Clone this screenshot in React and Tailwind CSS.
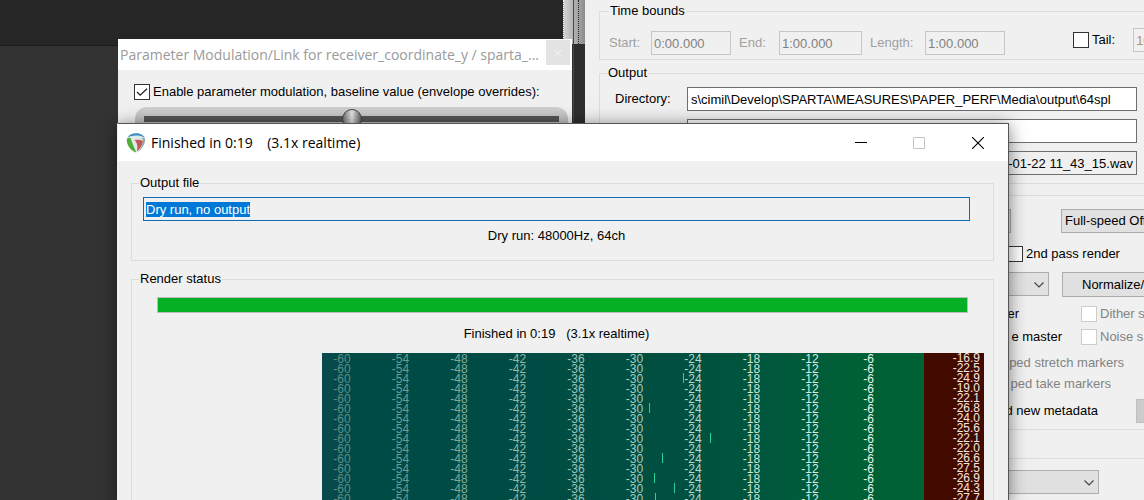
import { useEffect, useRef } from "react";

const SCALE = ["-60", "-54", "-48", "-42", "-36", "-30", "-24", "-18", "-12", "-6"];
const SCALE_COLORS = [
  "text-[#5f8c88]",
  "text-[#6f9a92]",
  "text-[#82aa9c]",
  "text-[#93b7aa]",
  "text-[#9fc2b4]",
  "text-[#a9ccbe]",
  "text-[#b8d8ca]",
  "text-[#cbe6d8]",
  "text-[#d8eee2]",
  "text-[#e6f6ec]",
];

// peak level per channel, with the position of its marker along the meter (percent)
const CHANNELS = [
  { peak: "-16.9" },
  { peak: "-22.5" },
  { peak: "-24.9", mark: 54.6 },
  { peak: "-19.0" },
  { peak: "-22.1" },
  { peak: "-26.8", mark: 49.4 },
  { peak: "-24.0" },
  { peak: "-25.6" },
  { peak: "-22.1", mark: 58.6 },
  { peak: "-22.0" },
  { peak: "-26.6", mark: 51.4 },
  { peak: "-27.5" },
  { peak: "-26.9", mark: 50.1 },
  { peak: "-24.3", mark: 53.1 },
  { peak: "-27.7", mark: 50.3 },
];

const CHECK =
  "peer h-4 w-4 appearance-none border border-[#333] bg-white disabled:border-[#ccc]";

function Check({ label, dim, checked, className = "" }) {
  return (
    <label className={"flex items-center gap-[3px] " + (dim ? "text-[#838383] " : "") + className}>
      <span className="relative flex h-4 w-4 shrink-0">
        <input type="checkbox" defaultChecked={checked} disabled={dim} className={CHECK} />
        <svg
          viewBox="0 0 16 16"
          className="pointer-events-none absolute inset-0 hidden h-4 w-4 peer-checked:block"
          fill="none"
          stroke="#222"
          strokeWidth="1.3"
        >
          <path d="M3 8l3.200 3.200L13 4.800" />
        </svg>
      </span>
      {label}
    </label>
  );
}

function TimeField({ label, value, labelClass, inputClass }) {
  return (
    <label className="flex items-center text-[#a0a0a0]">
      <span className={labelClass}>{label}</span>
      <input
        disabled
        defaultValue={value}
        className={"h-6 border border-[#c6c6c6] bg-[#f0f0f0] px-0.5 text-[#808080] " + inputClass}
      />
    </label>
  );
}

function Chevron() {
  return (
    <svg
      viewBox="0 0 10 6"
      className="pointer-events-none absolute top-[10px] right-[5px] h-[6px] w-[10px]"
      fill="none"
      stroke="#444"
      strokeWidth="1.2"
    >
      <path d="M.5.5L5 5 9.5.5" />
    </svg>
  );
}

function RenderSettings() {
  return (
    <section
      aria-label="Render settings"
      className="absolute inset-y-0 right-0 left-[585px] overflow-hidden bg-[#f0f0f0] pt-[3px] pl-[14px] whitespace-nowrap"
    >
      <fieldset className="border border-r-0 border-[#dcdcdc] pt-[9px] pb-1 pl-[9px]">
        <legend className="px-px">Time bounds</legend>
        <div className="flex h-[27px]">
          <div className="mt-[3px] flex shrink-0 gap-2">
            <TimeField label="Start:" value="0:00.000" labelClass="w-[42px]" inputClass="w-20" />
            <TimeField label="End:" value="1:00.000" labelClass="w-10" inputClass="w-[83px]" />
            <TimeField label="Length:" value="1:00.000" labelClass="w-[55px]" inputClass="w-20" />
          </div>
          <Check label="Tail:" className="ml-[68px] h-6 shrink-0" />
          <input
            aria-label="Tail length"
            disabled
            defaultValue="1000"
            className="ml-[18px] h-6 w-20 shrink-0 border border-[#c6c6c6] bg-[#f0f0f0] px-0.5 text-[#b58f74]"
          />
        </div>
      </fieldset>

      <fieldset className="mt-[5px] flex flex-col gap-2 border border-r-0 border-[#dcdcdc] pt-[6px] pb-2 pl-[15px]">
        <legend className="-ml-2 px-px">Output</legend>
        <label className="flex items-center">
          <span className="w-[72px]">Directory:</span>
          <input
            defaultValue="s\cimil\Develop\SPARTA\MEASURES\PAPER_PERF\Media\output\64spl"
            className="h-6 w-[450px] shrink-0 border border-[#6e6e6e] bg-white px-[3px]"
          />
        </label>
        <input
          aria-label="File name"
          className="ml-[72px] h-6 w-[450px] shrink-0 border border-[#6e6e6e] bg-white px-[3px]"
        />
        <input
          aria-label="Render to"
          readOnly
          value="5-01-22 11_43_15.wav"
          className="ml-[72px] h-6 w-[450px] shrink-0 border border-[#6e6e6e] bg-[#f0f0f0] px-[3px] text-right"
        />
      </fieldset>

      <div className="mt-[11px] flex flex-col border border-r-0 border-[#dcdcdc] pt-[13px] pb-[6px]">
        <div className="flex">
          <button
            aria-label="Channels"
            className="ml-[331px] h-6 w-20 shrink-0 border border-[#adadad] bg-[#e1e1e1]"
          />
          <select
            aria-label="Render speed"
            className="ml-[50px] h-6 w-40 shrink-0 appearance-none border border-[#adadad] bg-[#e1e1e1] pl-[3px]"
          >
            <option>Full-speed Offline</option>
          </select>
        </div>
        <Check label="2nd pass render" className="mt-[13px] ml-[407px]" />
        <div className="mt-[10px] flex">
          <span className="relative ml-[300px] flex w-[149px] shrink-0">
            <select
              aria-label="Resample mode"
              className="h-6 w-full appearance-none border border-[#adadad] bg-[#e1e1e1]"
            />
            <Chevron />
          </span>
          <button className="ml-[13px] h-[25px] w-40 shrink-0 border border-[#adadad] bg-[#e1e1e1] pl-[19px] text-left">
            Normalize/Limit...
          </button>
        </div>
        <div className="mt-[9px] flex">
          <span className="w-[419px] shrink-0 text-right">er</span>
          <Check label="Dither s" dim className="ml-[62px]" />
        </div>
        <div className="mt-[7px] flex">
          <span className="w-[462px] shrink-0 text-right">e master</span>
          <Check label="Noise s" dim className="ml-[19px]" />
        </div>
        <span className="mt-[10px] w-[524px] text-right text-[#838383]">ped stretch markers</span>
        <span className="mt-[5px] w-[511px] text-right text-[#838383]">ped take markers</span>
        <div className="mt-[7px] flex items-center">
          <span className="w-[498px] shrink-0 text-right">d new metadata</span>
          <button
            aria-label="Metadata"
            className="ml-[38px] h-6 w-20 shrink-0 border border-[#bfbfbf] bg-[#cccccc]"
          />
        </div>
      </div>

      <div className="mt-7 border border-r-0 border-[#dcdcdc] pt-[11px] pb-10">
        <span className="relative ml-[200px] flex w-[299px]">
          <select
            aria-label="Format"
            className="h-6 w-full appearance-none border border-[#adadad] bg-[#e1e1e1]"
          />
          <Chevron />
        </span>
      </div>
    </section>
  );
}

function ModulationWindow() {
  return (
    <section
      aria-label="Parameter modulation"
      className="absolute top-[39px] left-[118px] h-40 w-[454px] bg-[#f0f0f0]"
    >
      <header className="flex h-[31px] items-center justify-between bg-white pl-[2px]">
        <h2 className="font-['Open_Sans','Noto_Sans',sans-serif] text-sm whitespace-nowrap text-[#9a9a9a]">
          Parameter Modulation/Link for receiver_coordinate_y / sparta_...
        </h2>
        <button
          aria-label="Close"
          className="mr-0.5 mb-1 flex h-[25px] w-6 shrink-0 items-center justify-center bg-[#e3e3e3]"
        >
          <svg viewBox="0 0 10 10" className="h-2 w-2" stroke="#f4f4f4" strokeWidth="1.2">
            <path d="M1 1l8 8M9 1L1 9" />
          </svg>
        </button>
      </header>
      <Check
        checked
        label="Enable parameter modulation, baseline value (envelope overrides):"
        className="mt-[14px] ml-4 whitespace-nowrap"
      />
      <div className="mt-[7px] mr-1 ml-[17px] flex h-6 items-center rounded-t-xl bg-linear-to-b from-[#cfcfcf] to-[#b8b8b8] px-[9px]">
        <input
          type="range"
          aria-label="Baseline value"
          defaultValue="50"
          className="h-[6px] w-full appearance-none bg-[#555] [&::-webkit-slider-thumb]:h-5 [&::-webkit-slider-thumb]:w-5 [&::-webkit-slider-thumb]:appearance-none [&::-webkit-slider-thumb]:rounded-full [&::-webkit-slider-thumb]:border [&::-webkit-slider-thumb]:border-[#444] [&::-webkit-slider-thumb]:bg-linear-to-r [&::-webkit-slider-thumb]:from-[#777] [&::-webkit-slider-thumb]:via-[#e6e6e6] [&::-webkit-slider-thumb]:to-[#666]"
        />
      </div>
    </section>
  );
}

function Logo() {
  return (
    <svg viewBox="0 0 20 20" className="h-5 w-5 shrink-0">
      <path d="M1 5.500C3 2 6 .3 10 .3s7.500 1.500 9 5c1 5-3.500 12-9 14.500C4 18 0 11 1 5.500z" fill="#dfe9e8" />
      <path d="M1.500 4.500C3.500 1.500 6.500.2 10 .2c4 0 7.500 1.500 9 5C17 3.500 14.500 2.800 11.500 2.600 8 2.300 4.500 3 1.500 4.500z" fill="#3a8cc0" />
      <path d="M1 5.500C2 4.800 3.500 4.500 4.500 5c1.200 3.500 3 8 5.800 14.600C4 17.500 0 11 1 5.500z" fill="#4fae35" />
      <path d="M8.500 7c3-.6 6.500-.3 8.500 1.200-.5 3.500-3 7.800-6 10.300.8-4.500.6-8.500-2.500-11.500z" fill="#c4575a" />
      <path d="M15 4.500c1.800.2 3.200.8 4.200 1.800-.1 4.500-3.200 9.700-7.200 12.700 3-3.800 5-8 5-11-.2-1.600-.8-2.700-2-3.500z" fill="#8fa6a6" />
    </svg>
  );
}

function LevelMeter() {
  return (
    <div className="relative mt-3 mr-[9px] ml-[189px] flex flex-col overflow-hidden bg-[linear-gradient(90deg,#094a50_0%,#004b45_5%,#004c45_30%,#005040_55%,#005a3c_72%,#006035_80%,#006236_91%,#430a00_91%,#430a00_100%)] font-['Liberation_Sans',Arial,sans-serif] text-xs">
      {CHANNELS.map((channel, row) => (
        <div key={row} className="relative flex h-[10px] items-center leading-[10px]">
          <div className="grid w-[585px] grid-cols-10 pt-0.5">
            {SCALE.map((db, i) => (
              <span key={db} className={"w-10 text-center " + SCALE_COLORS[i]}>
                {db}
              </span>
            ))}
          </div>
          <span className="flex-1 pr-[4px] text-right text-[#f4e8e0]">{channel.peak}</span>
          {channel.mark && (
            <i className="absolute inset-y-0 w-px bg-[#2bd09c]" style={{ left: channel.mark + "%" }} />
          )}
        </div>
      ))}
    </div>
  );
}

function RenderDialog() {
  const fileRef = useRef(null);
  useEffect(() => {
    fileRef.current.focus();
    fileRef.current.select();
  }, []);

  return (
    <section
      role="dialog"
      aria-label="Render progress"
      className="absolute top-[123px] left-[117px] w-[892px] border border-[#555] border-l-[#f0f0f0] bg-[#f0f0f0] shadow-[0_2px_16px_rgba(0,0,0,0.5)]"
    >
      <header className="flex h-[37px] items-center bg-white pl-2">
        <Logo />
        <h1 className="ml-[5px] flex-1 font-['Open_Sans','Noto_Sans',sans-serif] text-sm whitespace-pre text-black">
          {"Finished in 0:19    (3.1x realtime)"}
        </h1>
        <button aria-label="Minimize" className="flex h-full w-[58px] items-center justify-center">
          <svg viewBox="0 0 12 12" className="h-3 w-3" stroke="#000" shapeRendering="crispEdges">
            <path d="M0 5.500h12" />
          </svg>
        </button>
        <button
          aria-label="Maximize"
          disabled
          className="flex h-full w-[58px] items-center justify-center"
        >
          <svg viewBox="0 0 12 12" className="h-3 w-3" fill="none" stroke="#c4c4c4">
            <path d="M.5.5h11v11H.5z" />
          </svg>
        </button>
        <button aria-label="Close" className="flex h-full w-[60px] items-center justify-center">
          <svg viewBox="0 0 12 12" className="h-3 w-3" stroke="#000" strokeWidth="1.100">
            <path d="M0 0l12 12M12 0L0 12" />
          </svg>
        </button>
      </header>

      <div className="pt-[14px] pr-[14px] pl-[13px]">
        <fieldset className="h-[86px] border border-[#dcdcdc] px-[11px] pt-[6px]">
          <legend className="-ml-1 px-px">Output file</legend>
          <div className="mr-3">
            <input
              ref={fileRef}
              aria-label="Output file"
              readOnly
              value="Dry run, no output"
              className="block h-6 w-full border border-[#0f6cb0] bg-[#f0f0f0] px-0.5 outline-none selection:bg-[#0078d7] selection:text-white"
            />
            <p className="mt-[7px] text-center">Dry run: 48000Hz, 64ch</p>
          </div>
        </fieldset>

        <fieldset className="mt-[10px] border border-b-0 border-[#dcdcdc] pt-[10px]">
          <legend className="ml-[7px] px-px">Render status</legend>
          <div
            role="progressbar"
            aria-label="Render progress"
            aria-valuenow={100}
            className="mr-[25px] ml-[25px] h-4 border border-[#bcbcbc] bg-[#06b025]"
          />
          <p className="mt-[13px] mr-3 text-center whitespace-pre">
            {"Finished in 0:19   (3.1x realtime)"}
          </p>
          <div className="-mt-px pl-px">
            <LevelMeter />
          </div>
        </fieldset>
      </div>
    </section>
  );
}

export default function App() {
  return (
    <main className="relative h-screen overflow-hidden bg-[#333] font-['Liberation_Sans',Arial,sans-serif] text-[13px] leading-4 text-black">
      <div className="h-[46px] border-b border-[#1c1c1c] bg-[#262626]" />
      <div className="absolute inset-y-0 left-[563px] flex w-[22px] flex-col bg-[#2e2e2e]">
        <div className="h-11 border-l border-dotted border-white bg-linear-to-r from-[#d4d4d4] to-[#8c8c8c]" />
        <div className="absolute inset-y-0 left-[10px] w-px bg-[#a02020]" />
        <div className="absolute top-0 left-[15px] h-11 border-l border-dotted border-[#222]" />
      </div>
      <RenderSettings />
      <ModulationWindow />
      <RenderDialog />
    </main>
  );
}
